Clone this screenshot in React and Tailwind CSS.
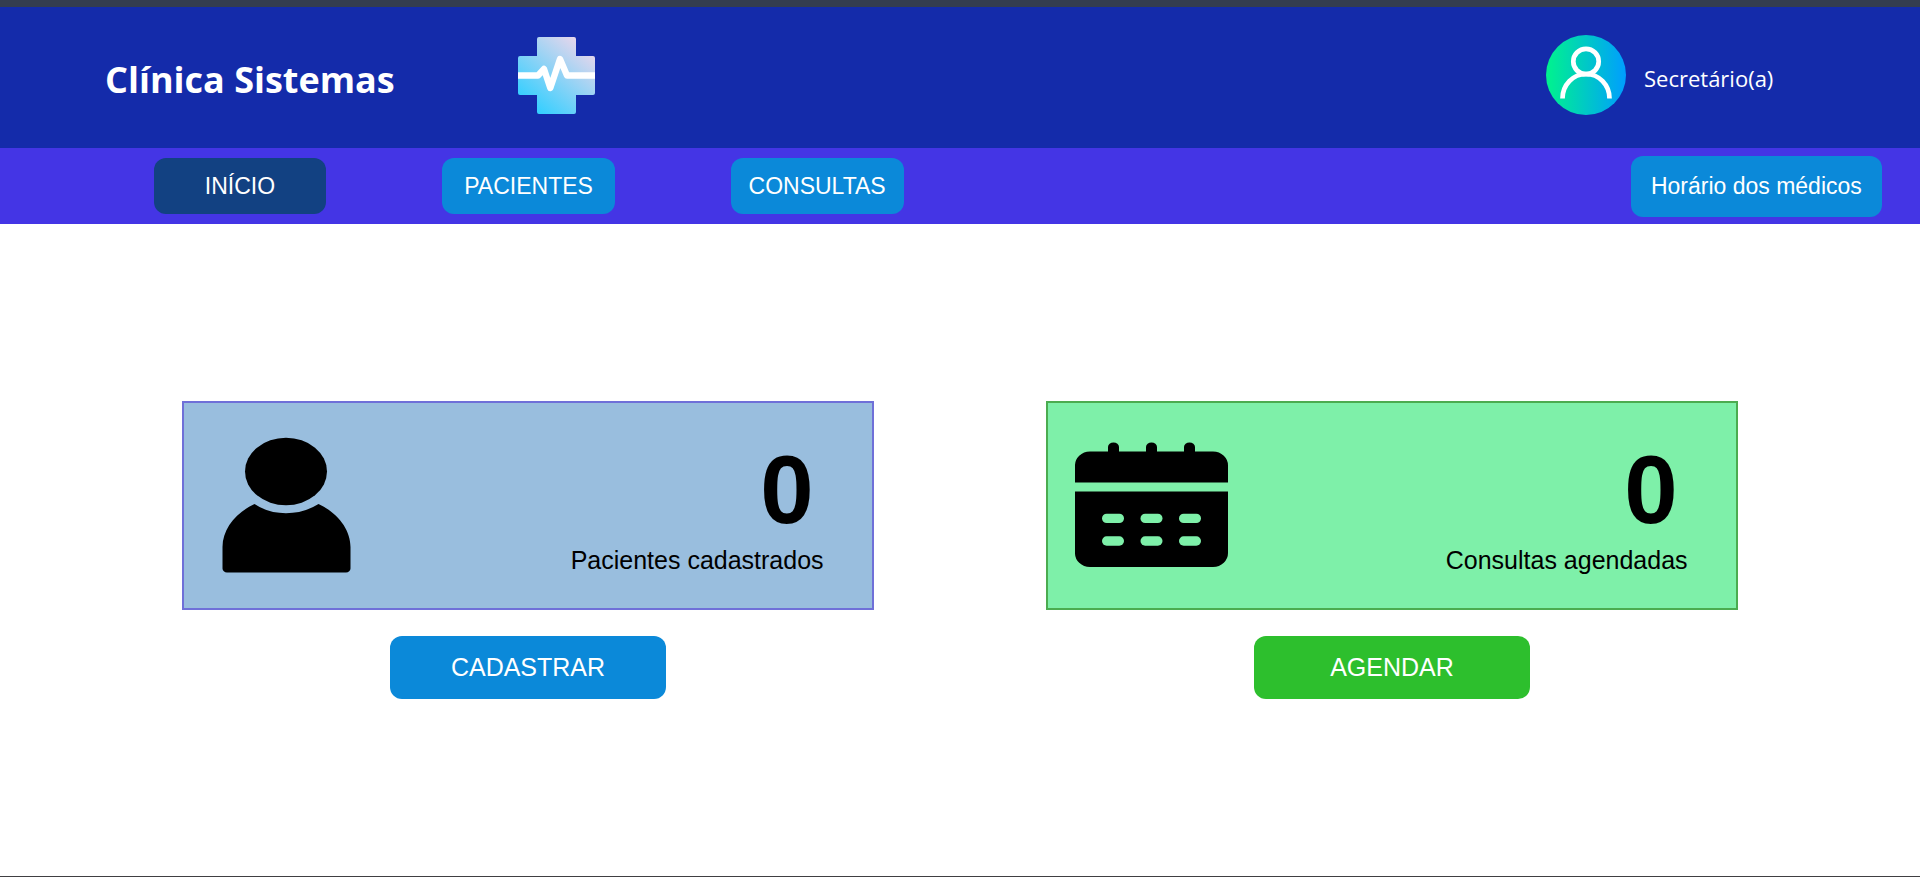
import React from "react";

const arial = "font-['Liberation_Sans',Arial,sans-serif]";
const humanist = "font-['Open_Sans','Noto_Sans',sans-serif]";

function LogoIcon() {
  return (
    <svg viewBox="0 0 77 77" className="h-[77px] w-[77px]" aria-hidden="true">
      <defs>
        <linearGradient id="cross" x1="15" y1="70" x2="66" y2="8" gradientUnits="userSpaceOnUse">
          <stop offset="0" stopColor="#36cfff" />
          <stop offset="1" stopColor="#e6d6ec" />
        </linearGradient>
      </defs>
      <path
        d="M21 0h35a2 2 0 0 1 2 2v17h17a2 2 0 0 1 2 2v35a2 2 0 0 1-2 2H58v17a2 2 0 0 1-2 2H21a2 2 0 0 1-2-2V58H2a2 2 0 0 1-2-2V21a2 2 0 0 1 2-2h17V2a2 2 0 0 1 2-2z"
        fill="url(#cross)"
      />
      <path
        d="M0 38.500h20l6-6.500 6.300 19 9.700-29 7 16.500h28"
        fill="none"
        stroke="#fff"
        strokeWidth="6.400"
        strokeLinejoin="round"
      />
    </svg>
  );
}

function AvatarIcon() {
  return (
    <svg viewBox="0 0 80 80" className="h-20 w-20" aria-hidden="true">
      <defs>
        <linearGradient id="avatar" x1="0" y1="0" x2="1" y2="0">
          <stop offset="0" stopColor="#00f38d" />
          <stop offset="1" stopColor="#009eff" />
        </linearGradient>
      </defs>
      <circle cx="40" cy="40" r="40" fill="url(#avatar)" />
      <g fill="none" stroke="#fff" strokeWidth="4.700">
        <circle cx="40" cy="26.500" r="12.700" />
        <path d="M16.500 63.500a23.500 24.500 0 0 1 47 0" />
      </g>
    </svg>
  );
}

function PersonIcon() {
  return (
    <svg viewBox="0 1 154 154" className="h-[154px] w-[154px]" aria-hidden="true">
      <ellipse cx="75" cy="43.500" rx="41" ry="33.700" />
      <path d="M43.500 76Q57 85.200 75 85.200T107.500 76C126 84.500 139.500 101 139.500 119v21.500a4.500 4 0 0 1-4.500 4H16a4.500 4 0 0 1-4.500-4V119C11.500 101 25 84.500 43.500 76z" />
    </svg>
  );
}

function CalendarIcon() {
  return (
    <svg viewBox="0 1 154 154" className="h-[154px] w-[154px]" aria-hidden="true">
      <path d="M0 54.500V38a15 14 0 0 1 15-14.500H33V19a5.500 4.500 0 0 1 11 0v4.500H71V19a5.500 4.500 0 0 1 11 0v4.500H109V19a5.500 4.500 0 0 1 11 0v4.500h18a15 14 0 0 1 15 14.500v16.500z" />
      <path d="M0 63.500h153v61a15 14 0 0 1-15 14.500H15a15 14 0 0 1-15-14.500z" />
      <g fill="#7ef0a9">
        {[27, 65.5, 104].map((x) =>
          [85.7, 108.3].map((y) => (
            <rect key={`${x}-${y}`} x={x} y={y} width="22" height="9.400" rx="4.700" />
          ))
        )}
      </g>
    </svg>
  );
}

function NavButton({ active, children }) {
  return (
    <button
      type="button"
      aria-current={active ? "page" : undefined}
      className={`h-14 w-[10%] rounded-xl text-[23px] text-white ${active ? "bg-[#124182]" : "bg-[#0b89d9]"}`}
    >
      {children}
    </button>
  );
}

function Summary({ icon, count, label, action, cardColor, buttonColor }) {
  return (
    <section className="flex flex-1 flex-col items-center">
      <div className={`flex h-[209px] w-4/5 items-center justify-between border-2 pr-12 pl-[27px] ${cardColor}`}>
        {icon}
        <div className="flex flex-col items-end pt-2">
          <span className="mr-2.5 text-[96px] leading-[100px] font-bold">{count}</span>
          <span className="text-[25px] leading-10">{label}</span>
        </div>
      </div>
      <button type="button" className={`mt-[26px] h-[63px] w-[32%] rounded-xl text-[25px] text-white ${buttonColor}`}>
        {action}
      </button>
    </section>
  );
}

export default function App() {
  return (
    <div className={`flex min-h-screen flex-col border-t-[7px] border-b border-t-[#343d4f] border-b-[#403f42] bg-white text-black ${arial}`}>
      <header className={`flex h-[141px] items-center bg-[#142baa] text-white ${humanist}`}>
        <div className="flex w-[27%] pt-1 pl-[105px]">
          <h1 className="text-4xl leading-none font-bold">Clínica Sistemas</h1>
        </div>
        <div className="mb-1">
          <LogoIcon />
        </div>
        <div className="mb-1.5 ml-auto flex w-[374px] items-center gap-[18px]">
          <AvatarIcon />
          <span className="pt-2 text-[22px]">Secretário(a)</span>
        </div>
      </header>

      <nav className="flex h-19 items-center gap-[6.7%] bg-[#4435e5] pr-[2%] pl-[8%]">
        <NavButton active>INÍCIO</NavButton>
        <NavButton>PACIENTES</NavButton>
        <NavButton>CONSULTAS</NavButton>
        <button type="button" className="ml-auto h-[61px] w-[14.5%] rounded-xl bg-[#0b89d9] text-[23px] text-white">
          Horário dos médicos
        </button>
      </nav>

      <main className="flex flex-1 items-center px-[5%]">
        <Summary
          icon={<PersonIcon />}
          count={0}
          label="Pacientes cadastrados"
          action="CADASTRAR"
          cardColor="border-[#6f70d8] bg-[#99bede]"
          buttonColor="bg-[#0b89d9]"
        />
        <Summary
          icon={<CalendarIcon />}
          count={0}
          label="Consultas agendadas"
          action="AGENDAR"
          cardColor="border-[#4bac50] bg-[#7ef0a9]"
          buttonColor="bg-[#2dbf2d]"
        />
      </main>
    </div>
  );
}
